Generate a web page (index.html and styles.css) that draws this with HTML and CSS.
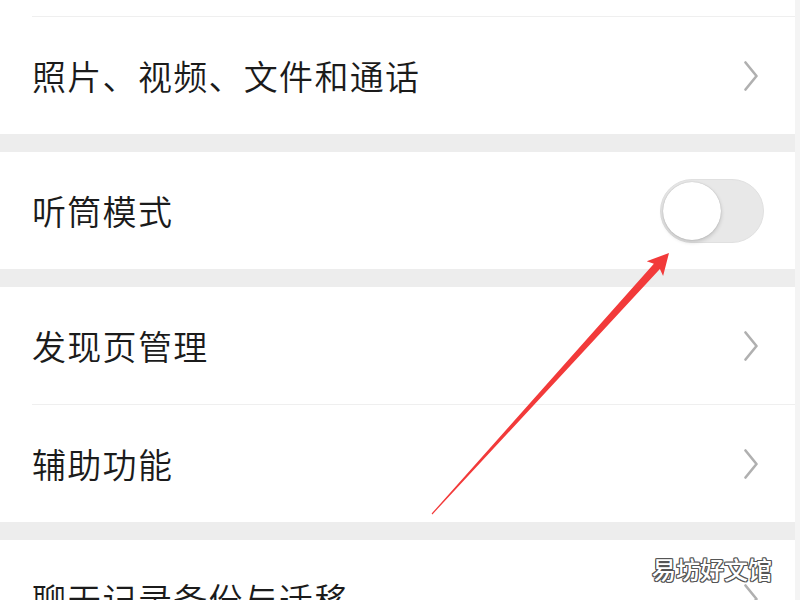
FILE: index.html
```html
<!DOCTYPE html>
<html lang="zh-CN">
	<head>
		<title>设置</title>
		<link rel="stylesheet" href="styles.css">
	</head>

	<body>
		<div class="screen">
			<div class="group">
				<div class="row-cut"></div>
				<div class="divider"></div>
				<div class="row">
					<span class="label">照片、视频、文件和通话</span>
					<svg class="chevron" viewBox="0 0 14 30" width="14" height="30"><polyline points="1.5,1.5 12.5,15 1.5,28.5"/></svg>
				</div>
			</div>

			<div class="group">
				<div class="row">
					<span class="label">听筒模式</span>
					<div class="toggle"><div class="knob"></div></div>
				</div>
			</div>

			<div class="group">
				<div class="row">
					<span class="label">发现页管理</span>
					<svg class="chevron" viewBox="0 0 14 30" width="14" height="30"><polyline points="1.5,1.5 12.5,15 1.5,28.5"/></svg>
				</div>
				<div class="divider"></div>
				<div class="row">
					<span class="label">辅助功能</span>
					<svg class="chevron" viewBox="0 0 14 30" width="14" height="30"><polyline points="1.5,1.5 12.5,15 1.5,28.5"/></svg>
				</div>
			</div>

			<div class="group">
				<div class="row">
					<span class="label">聊天记录备份与迁移</span>
					<svg class="chevron" viewBox="0 0 14 30" width="14" height="30"><polyline points="1.5,1.5 12.5,15 1.5,28.5"/></svg>
				</div>
			</div>

			<!-- annotation drawn over the screenshot -->
			<svg class="arrow" viewBox="0 0 800 600" width="800" height="600">
				<polygon points="431.6,513.6 653.9,263.7 646.7,261.2 669,253 663.1,276 659.9,269.1 432.4,514.4"/>
			</svg>
			<div class="watermark">易坊好文馆</div>
		</div>
	</body>
</html>
```

FILE: styles.css
```css
/* general styling */
* {
	box-sizing: border-box;
	margin: 0;
	padding: 0;
}

html, body {
	height: 100%;
	overflow: hidden;
}

body {
	background-color: #ededed;
	font-family: "Noto Sans CJK SC", "Noto Sans", sans-serif;
}

.screen {
	position: relative;
	width: 800px;
	height: 600px;
	overflow: hidden;
	border-right: 5px solid #f4f4f4;
	display: flex;
	flex-direction: column;
	gap: 18px;
}

.group {
	background-color: #fff;
	display: flex;
	flex-direction: column;
}

.row-cut {
	height: 16px;
}

.divider {
	height: 1px;
	margin-left: 32px;
	background-color: #efefef;
}

.row {
	height: 117px;
	flex-shrink: 0;
	display: flex;
	align-items: center;
	justify-content: space-between;
	padding: 0 31px 0 32px;
}

.label {
	font-size: 34px;
	font-weight: 350;
	color: #1b1b1b;
	letter-spacing: 1.3px;
}

.chevron {
	margin-right: 6px;
	fill: none;
	stroke: #b0b0b0;
	stroke-width: 2.6;
	stroke-linecap: round;
	stroke-linejoin: round;
}

/* switch, off state */
.toggle {
	width: 104px;
	height: 64px;
	border-radius: 32px;
	background-color: #e8e8e8;
	border: 1px solid #e0e0e0;
	display: flex;
	align-items: center;
	padding-left: 2px;
}

.knob {
	width: 58px;
	height: 58px;
	border-radius: 50%;
	background-color: #fff;
	box-shadow: 0 2px 4px rgba(0,0,0,0.18), 0 0 1px rgba(0,0,0,0.25);
}

.arrow {
	position: absolute;
	left: 0;
	top: 0;
	fill: #f23a3a;
}

.watermark {
	position: absolute;
	left: 652px;
	top: 551px;
	font-size: 24px;
	font-weight: 500;
	color: #fff;
	text-shadow:
		1px 0 0 #555,
		-1px 0 0 #555,
		0 1px 0 #555,
		0 -1px 0 #555,
		1px 1px 0 #555,
		-1px -1px 0 #555,
		1px -1px 0 #555,
		-1px 1px 0 #555;
}
```
